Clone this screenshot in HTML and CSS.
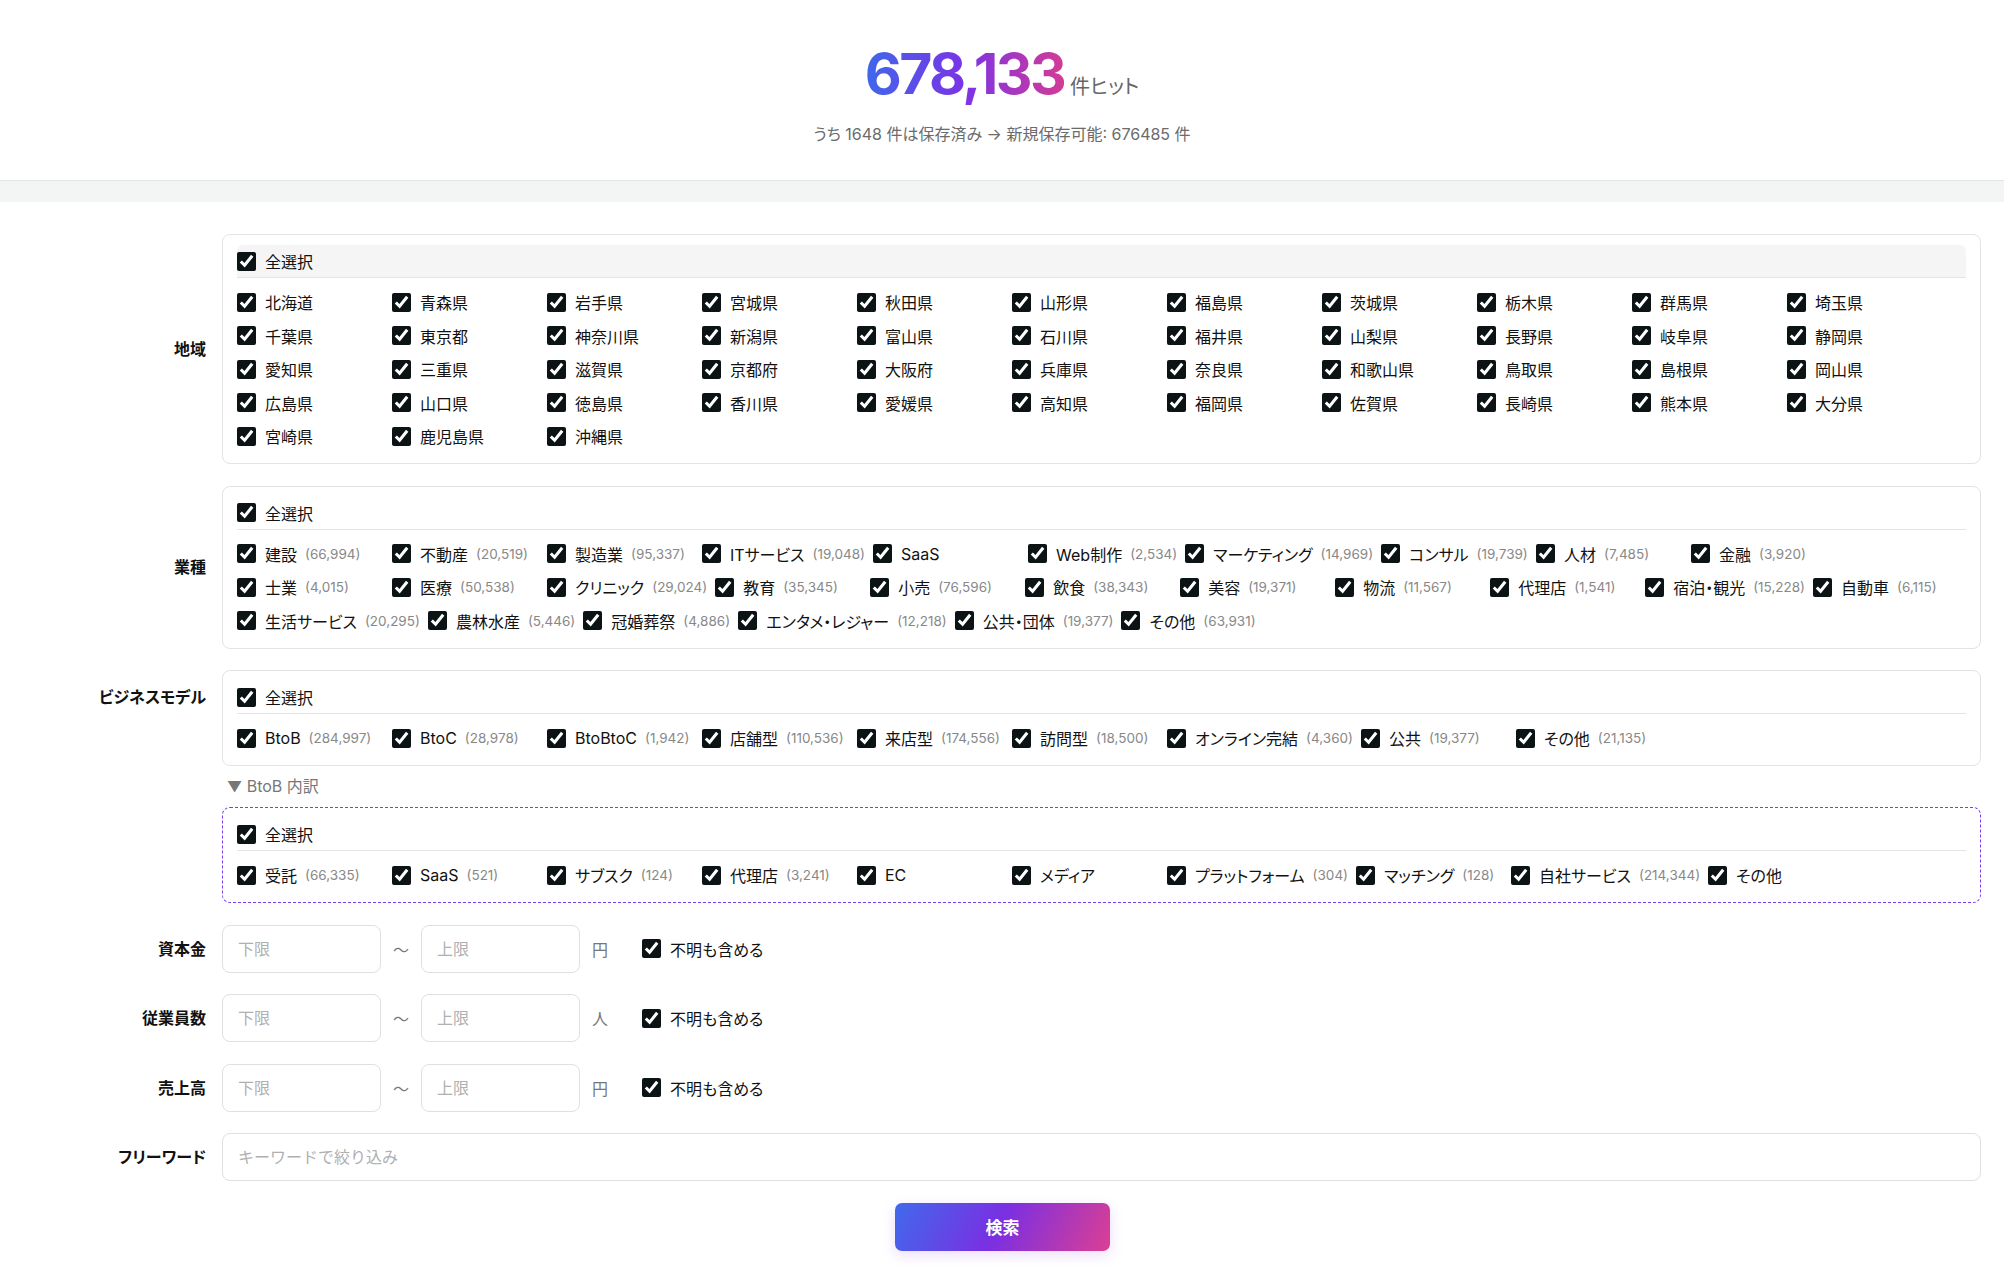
FILE: index.html
```html
<!DOCTYPE html>
<html lang="ja">

<head>
  <meta charset="UTF-8">
  <meta name="viewport" content="width=device-width, initial-scale=1.0">
  <title>検索</title>
  <link rel="stylesheet" href="styles.css">
</head>

<body>
  <header class="hits">
    <div class="hits-count">
      <span class="hits-num">678,133</span><span class="hits-unit">件ヒット</span>
    </div>
    <p class="hits-sub">うち 1648 件は保存済み → 新規保存可能: 676485 件</p>
  </header>
  <div class="band"></div>

  <form class="filters" onsubmit="return false">
    <!-- 地域 -->
    <div class="row">
      <div class="row-label">地域</div>
      <div class="row-body">
        <div class="box">
          <label class="all shaded"><input type="checkbox" checked><span>全選択</span></label>
          <div class="opts">
            <label class="opt"><input type="checkbox" checked><span>北海道</span></label>
            <label class="opt"><input type="checkbox" checked><span>青森県</span></label>
            <label class="opt"><input type="checkbox" checked><span>岩手県</span></label>
            <label class="opt"><input type="checkbox" checked><span>宮城県</span></label>
            <label class="opt"><input type="checkbox" checked><span>秋田県</span></label>
            <label class="opt"><input type="checkbox" checked><span>山形県</span></label>
            <label class="opt"><input type="checkbox" checked><span>福島県</span></label>
            <label class="opt"><input type="checkbox" checked><span>茨城県</span></label>
            <label class="opt"><input type="checkbox" checked><span>栃木県</span></label>
            <label class="opt"><input type="checkbox" checked><span>群馬県</span></label>
            <label class="opt"><input type="checkbox" checked><span>埼玉県</span></label>
            <label class="opt"><input type="checkbox" checked><span>千葉県</span></label>
            <label class="opt"><input type="checkbox" checked><span>東京都</span></label>
            <label class="opt"><input type="checkbox" checked><span>神奈川県</span></label>
            <label class="opt"><input type="checkbox" checked><span>新潟県</span></label>
            <label class="opt"><input type="checkbox" checked><span>富山県</span></label>
            <label class="opt"><input type="checkbox" checked><span>石川県</span></label>
            <label class="opt"><input type="checkbox" checked><span>福井県</span></label>
            <label class="opt"><input type="checkbox" checked><span>山梨県</span></label>
            <label class="opt"><input type="checkbox" checked><span>長野県</span></label>
            <label class="opt"><input type="checkbox" checked><span>岐阜県</span></label>
            <label class="opt"><input type="checkbox" checked><span>静岡県</span></label>
            <label class="opt"><input type="checkbox" checked><span>愛知県</span></label>
            <label class="opt"><input type="checkbox" checked><span>三重県</span></label>
            <label class="opt"><input type="checkbox" checked><span>滋賀県</span></label>
            <label class="opt"><input type="checkbox" checked><span>京都府</span></label>
            <label class="opt"><input type="checkbox" checked><span>大阪府</span></label>
            <label class="opt"><input type="checkbox" checked><span>兵庫県</span></label>
            <label class="opt"><input type="checkbox" checked><span>奈良県</span></label>
            <label class="opt"><input type="checkbox" checked><span>和歌山県</span></label>
            <label class="opt"><input type="checkbox" checked><span>鳥取県</span></label>
            <label class="opt"><input type="checkbox" checked><span>島根県</span></label>
            <label class="opt"><input type="checkbox" checked><span>岡山県</span></label>
            <label class="opt"><input type="checkbox" checked><span>広島県</span></label>
            <label class="opt"><input type="checkbox" checked><span>山口県</span></label>
            <label class="opt"><input type="checkbox" checked><span>徳島県</span></label>
            <label class="opt"><input type="checkbox" checked><span>香川県</span></label>
            <label class="opt"><input type="checkbox" checked><span>愛媛県</span></label>
            <label class="opt"><input type="checkbox" checked><span>高知県</span></label>
            <label class="opt"><input type="checkbox" checked><span>福岡県</span></label>
            <label class="opt"><input type="checkbox" checked><span>佐賀県</span></label>
            <label class="opt"><input type="checkbox" checked><span>長崎県</span></label>
            <label class="opt"><input type="checkbox" checked><span>熊本県</span></label>
            <label class="opt"><input type="checkbox" checked><span>大分県</span></label>
            <label class="opt"><input type="checkbox" checked><span>宮崎県</span></label>
            <label class="opt"><input type="checkbox" checked><span>鹿児島県</span></label>
            <label class="opt"><input type="checkbox" checked><span>沖縄県</span></label>
          </div>
        </div>
      </div>
    </div>

    <!-- 業種 -->
    <div class="row">
      <div class="row-label">業種</div>
      <div class="row-body">
        <div class="box">
          <label class="all"><input type="checkbox" checked><span>全選択</span></label>
          <div class="opts">
            <label class="opt"><input type="checkbox" checked><span>建設</span><span class="cnt">(66,994)</span></label>
            <label class="opt"><input type="checkbox" checked><span>不動産</span><span class="cnt">(20,519)</span></label>
            <label class="opt"><input type="checkbox" checked><span>製造業</span><span class="cnt">(95,337)</span></label>
            <label class="opt"><input type="checkbox" checked><span>ITサービス</span><span class="cnt">(19,048)</span></label>
            <label class="opt"><input type="checkbox" checked><span>SaaS</span></label>
            <label class="opt"><input type="checkbox" checked><span>Web制作</span><span class="cnt">(2,534)</span></label>
            <label class="opt"><input type="checkbox" checked><span>マーケティング</span><span class="cnt">(14,969)</span></label>
            <label class="opt"><input type="checkbox" checked><span>コンサル</span><span class="cnt">(19,739)</span></label>
            <label class="opt"><input type="checkbox" checked><span>人材</span><span class="cnt">(7,485)</span></label>
            <label class="opt"><input type="checkbox" checked><span>金融</span><span class="cnt">(3,920)</span></label>
            <label class="opt"><input type="checkbox" checked><span>士業</span><span class="cnt">(4,015)</span></label>
            <label class="opt"><input type="checkbox" checked><span>医療</span><span class="cnt">(50,538)</span></label>
            <label class="opt"><input type="checkbox" checked><span>クリニック</span><span class="cnt">(29,024)</span></label>
            <label class="opt"><input type="checkbox" checked><span>教育</span><span class="cnt">(35,345)</span></label>
            <label class="opt"><input type="checkbox" checked><span>小売</span><span class="cnt">(76,596)</span></label>
            <label class="opt"><input type="checkbox" checked><span>飲食</span><span class="cnt">(38,343)</span></label>
            <label class="opt"><input type="checkbox" checked><span>美容</span><span class="cnt">(19,371)</span></label>
            <label class="opt"><input type="checkbox" checked><span>物流</span><span class="cnt">(11,567)</span></label>
            <label class="opt"><input type="checkbox" checked><span>代理店</span><span class="cnt">(1,541)</span></label>
            <label class="opt"><input type="checkbox" checked><span>宿泊・観光</span><span class="cnt">(15,228)</span></label>
            <label class="opt"><input type="checkbox" checked><span>自動車</span><span class="cnt">(6,115)</span></label>
            <label class="opt"><input type="checkbox" checked><span>生活サービス</span><span class="cnt">(20,295)</span></label>
            <label class="opt"><input type="checkbox" checked><span>農林水産</span><span class="cnt">(5,446)</span></label>
            <label class="opt"><input type="checkbox" checked><span>冠婚葬祭</span><span class="cnt">(4,886)</span></label>
            <label class="opt"><input type="checkbox" checked><span>エンタメ・レジャー</span><span class="cnt">(12,218)</span></label>
            <label class="opt"><input type="checkbox" checked><span>公共・団体</span><span class="cnt">(19,377)</span></label>
            <label class="opt"><input type="checkbox" checked><span>その他</span><span class="cnt">(63,931)</span></label>
          </div>
        </div>
      </div>
    </div>

    <!-- ビジネスモデル -->
    <div class="row top">
      <div class="row-label">ビジネスモデル</div>
      <div class="row-body">
        <div class="box">
          <label class="all"><input type="checkbox" checked><span>全選択</span></label>
          <div class="opts">
            <label class="opt"><input type="checkbox" checked><span>BtoB</span><span class="cnt">(284,997)</span></label>
            <label class="opt"><input type="checkbox" checked><span>BtoC</span><span class="cnt">(28,978)</span></label>
            <label class="opt"><input type="checkbox" checked><span>BtoBtoC</span><span class="cnt">(1,942)</span></label>
            <label class="opt"><input type="checkbox" checked><span>店舗型</span><span class="cnt">(110,536)</span></label>
            <label class="opt"><input type="checkbox" checked><span>来店型</span><span class="cnt">(174,556)</span></label>
            <label class="opt"><input type="checkbox" checked><span>訪問型</span><span class="cnt">(18,500)</span></label>
            <label class="opt"><input type="checkbox" checked><span>オンライン完結</span><span class="cnt">(4,360)</span></label>
            <label class="opt"><input type="checkbox" checked><span>公共</span><span class="cnt">(19,377)</span></label>
            <label class="opt"><input type="checkbox" checked><span>その他</span><span class="cnt">(21,135)</span></label>
          </div>
        </div>

        <details class="sub" open>
          <summary><span class="caret">▼</span> BtoB 内訳</summary>
          <div class="box dashed">
            <label class="all"><input type="checkbox" checked><span>全選択</span></label>
            <div class="opts">
              <label class="opt"><input type="checkbox" checked><span>受託</span><span class="cnt">(66,335)</span></label>
              <label class="opt"><input type="checkbox" checked><span>SaaS</span><span class="cnt">(521)</span></label>
              <label class="opt"><input type="checkbox" checked><span>サブスク</span><span class="cnt">(124)</span></label>
              <label class="opt"><input type="checkbox" checked><span>代理店</span><span class="cnt">(3,241)</span></label>
              <label class="opt"><input type="checkbox" checked><span>EC</span></label>
              <label class="opt"><input type="checkbox" checked><span>メディア</span></label>
              <label class="opt"><input type="checkbox" checked><span>プラットフォーム</span><span class="cnt">(304)</span></label>
              <label class="opt"><input type="checkbox" checked><span>マッチング</span><span class="cnt">(128)</span></label>
              <label class="opt"><input type="checkbox" checked><span>自社サービス</span><span class="cnt">(214,344)</span></label>
              <label class="opt"><input type="checkbox" checked><span>その他</span></label>
            </div>
          </div>
        </details>
      </div>
    </div>

    <!-- 数値レンジ -->
    <div class="row">
      <div class="row-label">資本金</div>
      <div class="range">
        <input class="field num" type="text" placeholder="下限">
        <span class="tilde">〜</span>
        <input class="field num" type="text" placeholder="上限">
        <span class="unit">円</span>
        <label class="unknown"><input type="checkbox" checked><span>不明も含める</span></label>
      </div>
    </div>

    <div class="row">
      <div class="row-label">従業員数</div>
      <div class="range">
        <input class="field num" type="text" placeholder="下限">
        <span class="tilde">〜</span>
        <input class="field num" type="text" placeholder="上限">
        <span class="unit">人</span>
        <label class="unknown"><input type="checkbox" checked><span>不明も含める</span></label>
      </div>
    </div>

    <div class="row">
      <div class="row-label">売上高</div>
      <div class="range">
        <input class="field num" type="text" placeholder="下限">
        <span class="tilde">〜</span>
        <input class="field num" type="text" placeholder="上限">
        <span class="unit">円</span>
        <label class="unknown"><input type="checkbox" checked><span>不明も含める</span></label>
      </div>
    </div>

    <div class="row">
      <div class="row-label">フリーワード</div>
      <div class="row-body">
        <input class="field wide" type="text" placeholder="キーワードで絞り込み">
      </div>
    </div>

    <div class="actions">
      <button class="search" type="submit">検索</button>
    </div>
  </form>
</body>

</html>
```

FILE: styles.css
```css
* {
  box-sizing: border-box;
}

body {
  margin: 0;
  background-color: #fff;
  color: #111;
  font-family: "Inter", "Noto Sans CJK JP", sans-serif;
  font-feature-settings: "palt";
}

/* ヒット件数 */
.hits {
  height: 181px;
  padding-top: 38px;
  text-align: center;
  border-bottom: 1px solid #e4e4e4;
  box-shadow: 0 1px 3px rgba(0, 0, 0, 0.04);
}

.hits-count {
  display: flex;
  justify-content: center;
  align-items: baseline;
  height: 72px;
}

.hits-num {
  font-size: 57px;
  font-weight: 700;
  line-height: 72px;
  letter-spacing: -0.045em;
  background: linear-gradient(90deg, #3f67ea 0%, #7b33e6 50%, #d33b96 100%);
  -webkit-background-clip: text;
  background-clip: text;
  color: transparent;
}

.hits-unit {
  margin-left: 6px;
  font-size: 20px;
  color: #666;
}

.hits-sub {
  margin: 14px 0 0;
  font-size: 16px;
  line-height: 20px;
  color: #6b6b6b;
}

.band {
  height: 21px;
  background-color: #f3f4f4;
}

/* フォーム */
.filters {
  display: flex;
  flex-direction: column;
  gap: 21.5px;
  padding: 32px 23px 20px 24px;
}

.row {
  display: flex;
  align-items: center;
  gap: 16px;
}

.row.top {
  align-items: flex-start;
}

.row-label {
  width: 182px;
  flex-shrink: 0;
  text-align: right;
  font-size: 16px;
  font-weight: 700;
  line-height: 20px;
}

.row.top .row-label {
  margin-top: 17px;
}

.row-body {
  flex: 1;
  min-width: 0;
}

.box {
  border: 1px solid #e3e3e3;
  border-radius: 8px;
  padding: 10px 14px 15px;
}

.box.dashed {
  border: 1px dashed #7c3aed;
}

input[type="checkbox"] {
  width: 19px;
  height: 19px;
  margin: 0 9px 0 0;
  flex-shrink: 0;
  accent-color: #0c1315;
}

.all {
  display: flex;
  align-items: center;
  height: 33px;
  font-size: 16px;
  border-bottom: 1px solid #e4e4e4;
}

.all.shaded {
  background-color: #f5f5f5;
  border-radius: 6px 6px 0 0;
}

.opts {
  display: flex;
  flex-wrap: wrap;
  column-gap: 8px;
  row-gap: 9.5px;
  margin-top: 12px;
}

.opt {
  display: flex;
  align-items: center;
  min-width: 147px;
  height: 24px;
  font-size: 16px;
  white-space: nowrap;
}

.cnt {
  margin-left: 8px;
  font-size: 13.5px;
  color: #888;
}

/* BtoB 内訳 */
.sub summary {
  display: block;
  margin: 12px 0;
  padding-left: 5px;
  font-size: 16px;
  line-height: 17px;
  color: #777;
  cursor: pointer;
}

.sub summary::-webkit-details-marker {
  display: none;
}

.caret {
  font-size: 15px;
}

/* 範囲入力 */
.range {
  display: flex;
  align-items: center;
  gap: 12px;
}

.field {
  height: 48px;
  padding: 0 15px;
  border: 1px solid #e0e0e0;
  border-radius: 8px;
  font-family: inherit;
  font-size: 16px;
  color: #111;
  outline: none;
}

.field::placeholder {
  color: #b0b0b0;
}

.field.num {
  width: 159px;
}

.field.wide {
  width: 100%;
}

.tilde {
  font-size: 16px;
  color: #777;
}

.unit {
  font-size: 16px;
  color: #777;
}

.unknown {
  display: flex;
  align-items: center;
  margin-left: 22px;
  font-size: 16px;
}

/* 検索ボタン */
.actions {
  display: flex;
  justify-content: center;
}

.search {
  width: 215px;
  height: 48px;
  border: none;
  border-radius: 7px;
  background: linear-gradient(115deg, #4169ec 0%, #7a2fe2 48%, #dc3f93 100%);
  box-shadow: 0 4px 14px rgba(150, 60, 230, 0.18);
  color: #fff;
  font-family: inherit;
  font-size: 17px;
  font-weight: 700;
  cursor: pointer;
}
```
